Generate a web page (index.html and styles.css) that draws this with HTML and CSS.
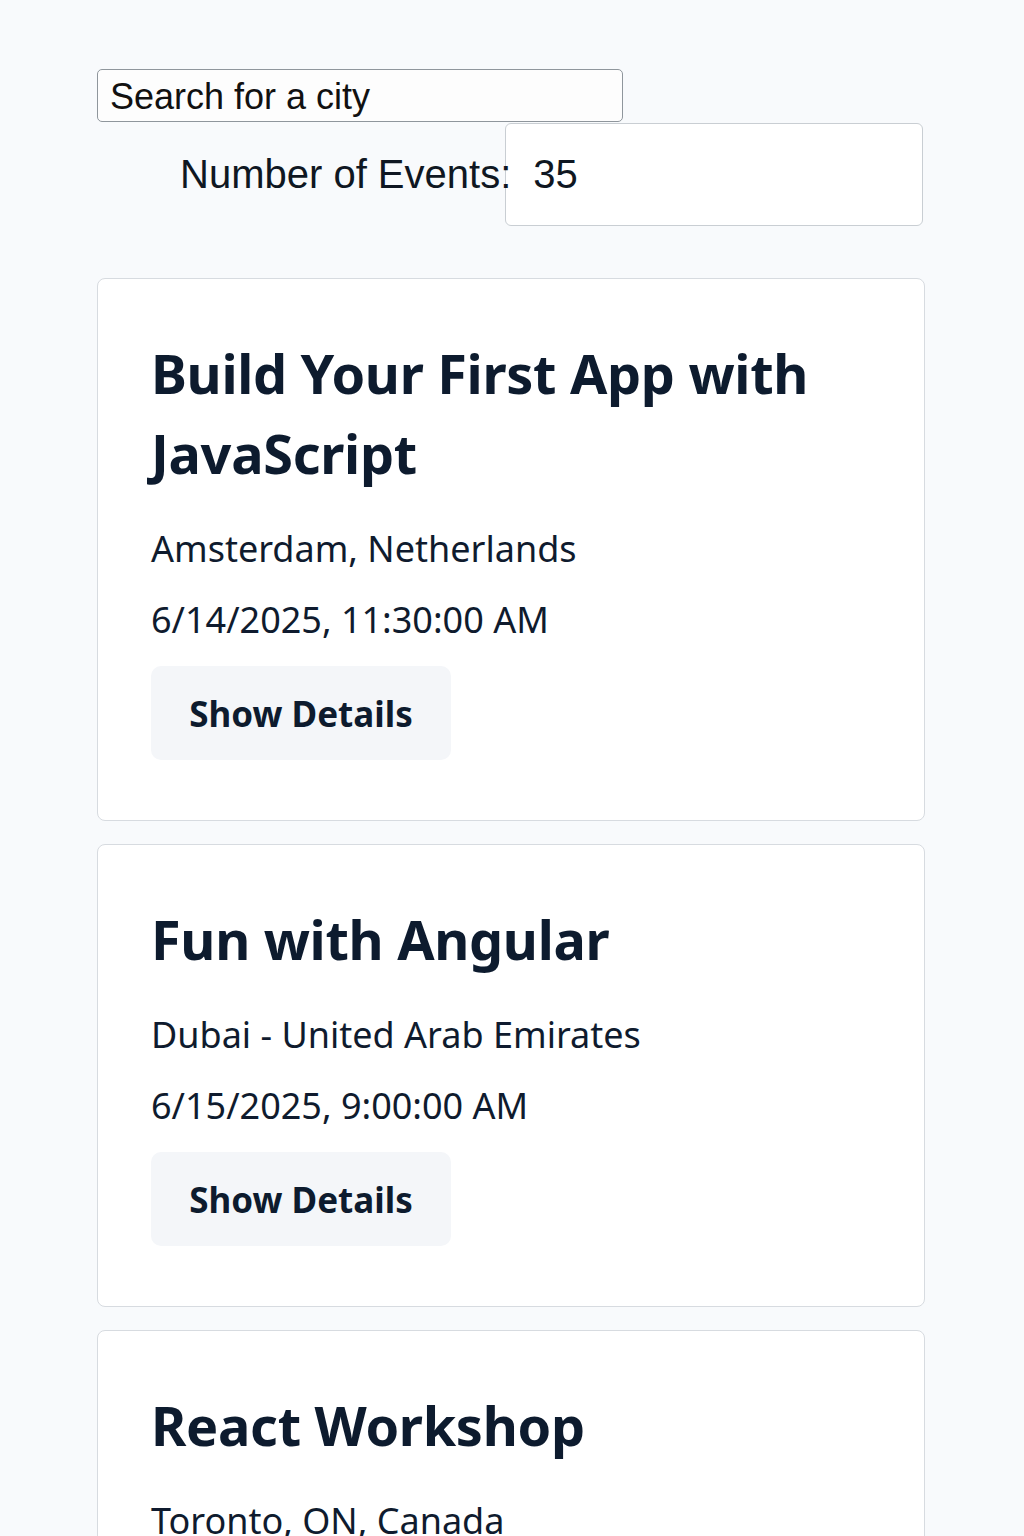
FILE: index.html
```html
<!DOCTYPE html>
<html lang="en">
<head>
<meta charset="utf-8">
<title>Events</title>
<link rel="stylesheet" href="styles.css">
</head>
<body>
<main class="app">
  <div class="city-search">
    <input class="city-input" type="text" placeholder="Search for a city">
  </div>
  <div class="number-row">
    <label class="number-label" for="num">Number of Events:</label>
    <input class="number-input" id="num" type="text" value="35">
  </div>
  <ul class="event-list">
    <li class="event">
      <h2 class="event-title">Build Your First App with JavaScript</h2>
      <p class="event-location">Amsterdam, Netherlands</p>
      <p class="event-date">6/14/2025, 11:30:00 AM</p>
      <button class="details-btn">Show Details</button>
    </li>
    <li class="event">
      <h2 class="event-title">Fun with Angular</h2>
      <p class="event-location">Dubai - United Arab Emirates</p>
      <p class="event-date">6/15/2025, 9:00:00 AM</p>
      <button class="details-btn">Show Details</button>
    </li>
    <li class="event">
      <h2 class="event-title">React Workshop</h2>
      <p class="event-location">Toronto, ON, Canada</p>
      <p class="event-date">6/16/2025, 2:00:00 PM</p>
      <button class="details-btn">Show Details</button>
    </li>
  </ul>
</main>
</body>
</html>
```

FILE: styles.css
```css
html, body {
  margin: 0;
  padding: 0;
  background: #f8fafc;
}
body {
  color: #0f1b2e;
  font-family: "Noto Sans", "Open Sans", sans-serif;
}
.app {
  margin: 0 99px 0 97px;
  padding-top: 69px;
}
.city-search {
  display: flex;
}
.city-input {
  width: 526px;
  height: 53px;
  box-sizing: border-box;
  border: 1.5px solid #8f969c;
  border-radius: 5px;
  padding: 2px 12px 0;
  font-family: "Liberation Sans", Arial, sans-serif;
  font-size: 36px;
  background: #fdfdfd;
  margin: 0;
}
.city-input::placeholder {
  color: #111;
  opacity: 1;
}
.number-row {
  display: flex;
  align-items: center;
  margin-top: 1px;
  padding-left: 83px;
}
.number-label {
  position: relative;
  z-index: 1;
  font-family: "Liberation Sans", Arial, sans-serif;
  font-size: 40px;
  color: #0f1722;
  margin-right: -6px;
  white-space: nowrap;
}
.number-input {
  width: 418px;
  height: 103px;
  box-sizing: border-box;
  border: 1.5px solid #c9ced3;
  border-radius: 6px;
  background: #fff;
  padding: 0 0 0 27px;
  font-family: "Liberation Sans", Arial, sans-serif;
  font-size: 40px;
  color: #0f1722;
  margin: 0;
}
.event-list {
  list-style: none;
  margin: 52px 0 0;
  padding: 0;
  display: flex;
  flex-direction: column;
  gap: 23px;
}
.event {
  background: #fff;
  border: 1.5px solid #d7dbe0;
  border-radius: 8px;
  padding: 54px 54px 60px 53px;
}
.event-title {
  margin: 0 0 35px;
  font-size: 54px;
  line-height: 80px;
  font-weight: 700;
  letter-spacing: -0.3px;
  color: #0d1b2e;
}
.event-location, .event-date {
  margin: 0;
  font-size: 36px;
  line-height: 42px;
  color: #0f1b2e;
}
.event-date {
  margin-top: 29px;
}
.details-btn {
  display: block;
  margin-top: 25px;
  width: 300px;
  height: 94px;
  border: none;
  border-radius: 10px;
  background: #f4f6f9;
  font-family: "Noto Sans", "Open Sans", sans-serif;
  font-size: 35px;
  font-weight: 700;
  color: #0d1b2e;
  padding: 0;
}
```
